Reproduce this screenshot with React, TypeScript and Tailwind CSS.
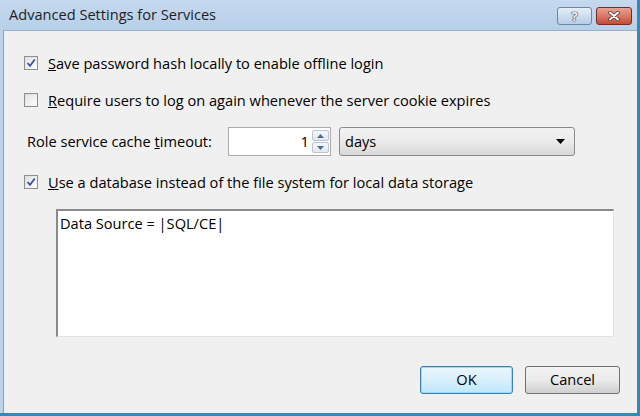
import React from "react";

const font = { fontFamily: '"Open Sans", "Noto Sans", sans-serif' };

function Check({ checked }: { checked: boolean }) {
  return (
    <span className="flex h-[14px] w-[14px] items-center justify-center border border-[#8f8f8f] bg-gradient-to-br from-[#dcdcdc] to-[#f8f8f8]">
      <span className="flex h-[10px] w-[10px] items-center justify-center bg-gradient-to-br from-[#e4e4e4] to-[#fbfbfb]">
        {checked && (
          <svg width="10" height="10" viewBox="0 0 10 10">
            <path d="M1.5 5 L4 7.8 L8.8 1.5" fill="none" stroke="#3c4fa3" strokeWidth="1.8" />
          </svg>
        )}
      </span>
    </span>
  );
}

function CheckRow({ checked, first, rest }: { checked: boolean; first: string; rest: string }) {
  return (
    <div className="flex h-[20px] items-center gap-[10px] pl-[20px]">
      <Check checked={checked} />
      <span className="text-[14.6px] leading-none text-black">
        <span className="underline">{first}</span>
        {rest}
      </span>
    </div>
  );
}

export default function App() {
  return (
    <div
      className="flex h-[416px] w-[640px] flex-col border-b-[3px] border-r-[3px] border-b-[#2e8cba] border-r-[#2e8cba] bg-[#bcd3ea]"
      style={font}
    >
      <div className="flex h-[30px] items-center bg-gradient-to-b from-[#c5d9ef] to-[#b7cfe8] pl-[9px] pr-[5px]">
        <span className="flex-1 text-[14.6px] text-[#1e1e1e]">Advanced Settings for Services</span>
        <div className="flex gap-[4px] pt-[2px]">
          <div className="flex h-[18px] w-[35px] items-center justify-center rounded-[3px] border border-[#6f86a0] bg-gradient-to-b from-[#e4eef9] to-[#b8cde4]">
            <span className="text-[13px] font-bold leading-none text-[#f4f4f4] [text-shadow:0_0_1px_#334,0_0_1px_#334,0_0_1px_#334]">?</span>
          </div>
          <div className="flex h-[18px] w-[36px] items-center justify-center rounded-[3px] border border-[#7a2a20] bg-gradient-to-b from-[#e8a394] to-[#c44a36]">
            <svg width="14" height="10" viewBox="0 0 14 10">
              <path d="M3 1.5 L11 8.5 M11 1.5 L3 8.5" stroke="#3a2a2a" strokeWidth="3.4" strokeLinecap="round" />
              <path d="M3 1.5 L11 8.5 M11 1.5 L3 8.5" stroke="#ffffff" strokeWidth="2" strokeLinecap="round" />
            </svg>
          </div>
        </div>
      </div>
      <div className="flex flex-1 pl-[3px]">
        <div className="flex flex-1 flex-col border-l border-t border-l-[#8aa0b8] border-t-[#9aaec4] bg-[#f0f0f0] pr-[16px] pt-[22px]">
          <CheckRow checked first="S" rest="ave password hash locally to enable offline login" />
          <div className="h-[17px]" />
          <CheckRow checked={false} first="R" rest="equire users to log on again whenever the server cookie expires" />
          <div className="mt-[17px] flex h-[29px] items-center pl-[23px]">
            <span className="w-[201px] text-[14.6px] text-black">
              Role service cache <span className="underline">t</span>imeout:
            </span>
            <div className="flex h-[29px] w-[103px] items-stretch border border-[#ababab] bg-white">
              <span className="flex flex-1 items-center justify-end pr-[3px] text-[15px] text-black">1</span>
              <div className="flex w-[18px] flex-col justify-center gap-[1px] py-[2px] pr-[1px]">
                <div className="flex flex-1 items-center justify-center rounded-[2px] border border-[#b8c4d2] bg-gradient-to-b from-[#f6f8fb] to-[#e2e8ef]">
                  <svg width="7" height="4" viewBox="0 0 7 4"><path d="M0 4 L3.5 0 L7 4Z" fill="#4a6b9a" /></svg>
                </div>
                <div className="flex flex-1 items-center justify-center rounded-[2px] border border-[#b8c4d2] bg-gradient-to-b from-[#f6f8fb] to-[#e2e8ef]">
                  <svg width="7" height="4" viewBox="0 0 7 4"><path d="M0 0 L3.5 4 L7 0Z" fill="#4a6b9a" /></svg>
                </div>
              </div>
            </div>
            <div className="ml-[8px] flex h-[29px] w-[236px] items-center rounded-[3px] border border-[#8a8a8a] bg-gradient-to-b from-[#f2f2f2] via-[#ebebeb] to-[#d8d8d8] pl-[5px] pr-[9px]">
              <span className="flex-1 text-[14.6px] text-black">days</span>
              <svg width="9" height="5" viewBox="0 0 9 5"><path d="M0 0 L9 0 L4.5 5Z" fill="#000" /></svg>
            </div>
          </div>
          <div className="h-[16px]" />
          <CheckRow checked first="U" rest="se a database instead of the file system for local data storage" />
          <div className="ml-[52px] mt-[17px] h-[128px] w-[558px] border-b border-l-2 border-r border-t-2 border-b-[#e3e3e3] border-l-[#8a8a8a] border-r-[#e3e3e3] border-t-[#8a8a8a] bg-white px-[2px]">
            <span className="text-[14.6px] leading-[20px] text-black">Data Source = |SQL/CE|</span>
          </div>
          <div className="mt-[29px] flex justify-end gap-[12px] pr-[1px]">
            <button className="h-[28px] w-[93px] rounded-[3px] border border-[#3c7fb1] bg-gradient-to-b from-[#eaf6fd] via-[#d9f0fc] to-[#bee6fd] text-[14.6px] text-black shadow-[inset_0_0_0_1px_#9ed8f8]">
              OK
            </button>
            <button className="h-[28px] w-[95px] rounded-[3px] border border-[#707070] bg-gradient-to-b from-[#f2f2f2] via-[#ebebeb] to-[#cfcfcf] text-[14.6px] text-black">
              Cancel
            </button>
          </div>
        </div>
      </div>
    </div>
  );
}
